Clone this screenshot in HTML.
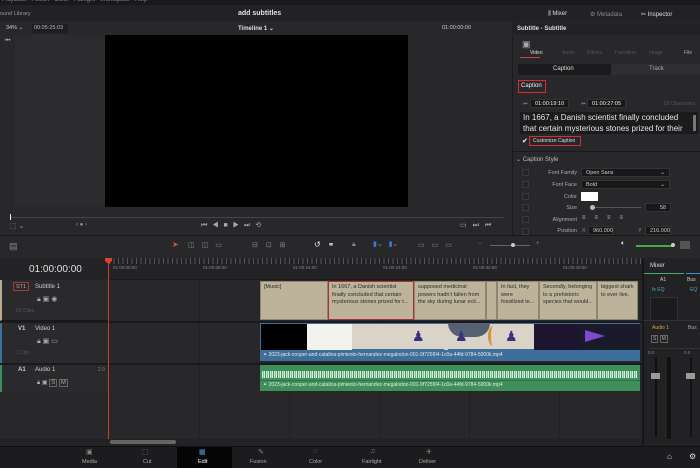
<!DOCTYPE html>
<html><head><meta charset="utf-8"><style>
*{margin:0;padding:0;box-sizing:border-box}
body{width:700px;height:468px;overflow:hidden;background:#1f1f22;font-family:"Liberation Sans",sans-serif;color:#c8c8c8;position:relative;font-size:6px}
.a{position:absolute}
.t{position:absolute;white-space:nowrap}
.clip{position:absolute;top:281px;height:39px;background:#bdb39b;border:1px solid #8e866f;color:#2a2a2a;font-size:5.5px;line-height:7.5px;padding:2px 3px;overflow:hidden}
.cb{width:7px;height:7px;border:1px solid #3a3a3d;background:#262629;position:absolute;left:522px}
.lab{position:absolute;right:123px;font-size:5.5px;color:#aaa;text-align:right}
.fld{position:absolute;background:#18181a;border:1px solid #333;height:9px;font-size:5.5px;color:#ccc;padding:1px 4px}
</style></head><body>
<div class="a" style="left:0;top:0;width:700px;height:5px;background:#19191b"></div>
<div class="t" style="left:2px;top:-3px;font-size:6px;color:#888">Playback &nbsp; Fusion &nbsp; Color &nbsp; Fairlight &nbsp; Workspace &nbsp; Help</div>
<div class="a" style="left:0;top:5px;width:512px;height:17px;background:#222225"></div>
<div class="t" style="left:0;top:11px;font-size:5.5px;color:#999">ound Library</div>
<div class="t" style="left:238px;top:10px;font-size:7px;color:#e0e0e0;font-weight:bold">add subtitles</div>
<div class="a" style="left:512px;top:5px;width:188px;height:17px;background:#222225"></div>
<div class="t" style="left:548px;top:11px;font-size:6px;color:#ddd">⫼ Mixer</div>
<div class="t" style="left:590px;top:11px;font-size:6px;color:#888">⚙ Metadata</div>
<div class="t" style="left:641px;top:11px;font-size:6px;color:#ddd">✂ Inspector</div>
<div class="a" style="left:0;top:22px;width:512px;height:13px;background:#28282b"></div>
<div class="t" style="left:6px;top:25px;font-size:5.5px;color:#ccc">34% ⌄</div>
<div class="a" style="left:32px;top:24px;width:36px;height:9px;background:#1e1e20"></div>
<div class="t" style="left:34px;top:25px;font-size:5.5px;color:#bbb">00:05:25:03</div>
<div class="t" style="left:238px;top:25px;font-size:6px;color:#ddd;font-weight:bold">Timeline 1 ⌄</div>
<div class="t" style="left:442px;top:25px;font-size:5.5px;color:#ccc">01:00:00:00</div>
<div class="a" style="left:0;top:35px;width:512px;height:200px;background:#28282b"></div>
<div class="a" style="left:15px;top:35px;width:90px;height:172px;background:#2c2c2f"></div>
<div class="a" style="left:105px;top:35px;width:303px;height:172px;background:#000"></div>
<div class="t" style="left:5px;top:38px;font-size:6px;color:#aaa">⏮</div>
<div class="a" style="left:10px;top:217px;width:494px;height:1px;background:#444"></div>
<div class="a" style="left:10px;top:214px;width:1px;height:6px;background:#eee"></div>
<div class="t" style="left:10px;top:222px;font-size:7px;color:#999">⬚ ⌄</div>
<div class="t" style="left:76px;top:222px;font-size:6px;color:#999">‹ ● ›</div>
<div class="t" style="left:201px;top:221px;font-size:7px;color:#aaa;letter-spacing:5px">⏮◀■▶⏭⟲</div>
<div class="t" style="left:460px;top:221px;font-size:7px;color:#aaa;letter-spacing:6px">▭⏭⏮</div>
<div class="a" style="left:512px;top:22px;width:188px;height:213px;background:#28282b;border-left:1px solid #1a1a1c"></div>
<div class="a" style="left:512px;top:23px;width:188px;height:12px;background:#222225"></div>
<div class="t" style="left:517px;top:26px;font-size:6px;color:#ddd;font-weight:bold">Subtitle - Subtitle</div>
<div class="t" style="left:522px;top:39px;font-size:9px;color:#aaa">▣</div>
<div class="t" style="left:530px;top:50px;font-size:5px;color:#ddd">Video</div>
<div class="a" style="left:520px;top:57px;width:20px;height:1px;background:#d04040"></div>
<div class="t" style="left:562px;top:50px;font-size:5px;color:#555">Audio</div>
<div class="t" style="left:587px;top:50px;font-size:5px;color:#555">Effects</div>
<div class="t" style="left:614px;top:50px;font-size:5px;color:#555">Transition</div>
<div class="t" style="left:649px;top:50px;font-size:5px;color:#555">Image</div>
<div class="t" style="left:684px;top:50px;font-size:5px;color:#aaa">File</div>
<div class="a" style="left:518px;top:64px;width:93px;height:11px;background:#1b1b1d"></div>
<div class="a" style="left:611px;top:64px;width:89px;height:11px;background:#2e2e31"></div>
<div class="t" style="left:553px;top:66px;font-size:6px;color:#ddd">Caption</div>
<div class="t" style="left:649px;top:66px;font-size:6px;color:#aaa">Track</div>
<div class="a" style="left:518px;top:80px;width:28px;height:13px;border:1px solid #d03030"></div>
<div class="t" style="left:521px;top:83px;font-size:6px;color:#eee">Caption</div>
<div class="t" style="left:523px;top:101px;font-size:5px;color:#888">⏮</div>
<div class="fld" style="left:530px;top:99px;width:39px;color:#eee">01:00:19:10</div>
<div class="t" style="left:581px;top:101px;font-size:5px;color:#888">⏮</div>
<div class="fld" style="left:587px;top:99px;width:39px;color:#eee">01:00:27:05</div>
<div class="t" style="left:664px;top:101px;font-size:5px;color:#555">93 Characters</div>
<div class="a" style="left:520px;top:112px;width:178px;height:22px;background:#1b1b1d"></div>
<div class="t" style="left:523px;top:113px;font-size:8px;line-height:10.5px;color:#e6e6e6">In 1667, a Danish scientist finally concluded<br>that certain mysterious stones prized for their</div>
<div class="a" style="left:693px;top:115px;width:3px;height:16px;background:#777"></div>
<div class="t" style="left:522px;top:137px;font-size:7px;color:#fff">✔</div>
<div class="a" style="left:529px;top:136px;width:52px;height:10px;border:1px solid #d03030"></div>
<div class="t" style="left:533px;top:138px;font-size:5px;color:#ddd">Customize Caption</div>
<div class="a" style="left:512px;top:151px;width:188px;height:1px;background:#1a1a1c"></div>
<div class="t" style="left:516px;top:156px;font-size:6px;color:#bbb">⌄ Caption Style</div>
<div class="cb" style="top:169px"></div><div class="lab" style="top:170px">Font Family</div><div class="fld" style="left:581px;top:168px;width:89px">Open Sans<span style="float:right">⌄</span></div>
<div class="cb" style="top:181px"></div><div class="lab" style="top:182px">Font Face</div><div class="fld" style="left:581px;top:180px;width:89px">Bold<span style="float:right">⌄</span></div>
<div class="cb" style="top:193px"></div><div class="lab" style="top:194px">Color</div><div class="a" style="left:581px;top:192px;width:17px;height:9px;background:#fff"></div>
<div class="cb" style="top:204px"></div><div class="lab" style="top:205px">Size</div><div class="a" style="left:591px;top:207px;width:50px;height:1px;background:#555"></div><div class="a" style="left:590px;top:205px;width:5px;height:5px;border-radius:50%;background:#bbb"></div><div class="fld" style="left:645px;top:203px;width:26px;text-align:right">58</div>
<div class="cb" style="top:216px"></div><div class="lab" style="top:217px">Alignment</div><div class="t" style="left:582px;top:215px;font-size:6px;color:#bbb;letter-spacing:9px">≡≡≡≡</div>
<div class="cb" style="top:228px"></div><div class="lab" style="top:228px">Position</div><div class="t" style="left:582px;top:228px;font-size:5.5px;color:#888">X</div><div class="fld" style="left:588px;top:226px;width:25px">960.000</div><div class="t" style="left:638px;top:228px;font-size:5.5px;color:#888">Y</div><div class="fld" style="left:645px;top:226px;width:26px">216.000</div>
<div class="a" style="left:0;top:235px;width:700px;height:23px;background:#28282b;border-top:1px solid #19191b"></div>
<div class="t" style="left:9px;top:241px;font-size:9px;color:#888">▤</div>
<div class="t" style="left:172px;top:240px;font-size:8px;color:#e04a3a">➤</div>
<div class="t" style="left:188px;top:241px;font-size:7px;color:#888;letter-spacing:7px">◫◫▭</div>
<div class="t" style="left:252px;top:241px;font-size:7px;color:#888;letter-spacing:8px">⊟⊡⊞</div>
<div class="t" style="left:314px;top:240px;font-size:8px;color:#eee;letter-spacing:7px">↺⚭</div>
<div class="t" style="left:352px;top:241px;font-size:7px;color:#888">🔒︎</div>
<div class="t" style="left:373px;top:240px;font-size:7px;color:#2f7fe0">▮<span style="color:#888">⌄</span> &nbsp; ▮<span style="color:#888">⌄</span></div>
<div class="t" style="left:418px;top:241px;font-size:7px;color:#888;letter-spacing:7px">▭▭▭</div>
<div class="t" style="left:478px;top:241px;font-size:6px;color:#888">−</div>
<div class="a" style="left:490px;top:245px;width:40px;height:1px;background:#666"></div>
<div class="a" style="left:511px;top:243px;width:4px;height:4px;border-radius:50%;background:#ccc"></div>
<div class="t" style="left:536px;top:241px;font-size:6px;color:#888">+</div>
<div class="t" style="left:621px;top:240px;font-size:7px;color:#ccc">🔈︎</div>
<div class="a" style="left:636px;top:245px;width:37px;height:2px;background:#3fae3f"></div>
<div class="a" style="left:671px;top:243px;width:4px;height:4px;border-radius:50%;background:#ccc"></div>
<div class="a" style="left:680px;top:241px;width:10px;height:8px;background:#555"></div>
<div class="a" style="left:0;top:258px;width:642px;height:188px;background:#28282b"></div>
<div class="a" style="left:0;top:258px;width:109px;height:22px;background:#232326"></div>
<div class="t" style="left:29px;top:264px;font-size:10px;color:#e0e0e0">01:00:00:00</div>
<div class="a" style="left:109px;top:258px;width:533px;height:22px;background:#232326;border-bottom:1px solid #1a1a1c"></div>
<div class="a" style="left:109px;top:258px;width:533px;height:6px;background:repeating-linear-gradient(90deg,#555 0 1px,transparent 1px 4.5px)"></div>
<div class="t" style="left:113px;top:265px;font-size:4.5px;color:#888">01:00:00:00</div>
<div class="t" style="left:203px;top:265px;font-size:4.5px;color:#888">01:00:08:00</div>
<div class="t" style="left:293px;top:265px;font-size:4.5px;color:#888">01:00:16:00</div>
<div class="t" style="left:383px;top:265px;font-size:4.5px;color:#888">01:00:24:00</div>
<div class="t" style="left:473px;top:265px;font-size:4.5px;color:#888">01:00:32:00</div>
<div class="t" style="left:563px;top:265px;font-size:4.5px;color:#888">01:00:40:00</div>
<div class="a" style="left:199px;top:280px;width:1px;height:166px;background:#222"></div>
<div class="a" style="left:289px;top:280px;width:1px;height:166px;background:#222"></div>
<div class="a" style="left:379px;top:280px;width:1px;height:166px;background:#222"></div>
<div class="a" style="left:469px;top:280px;width:1px;height:166px;background:#222"></div>
<div class="a" style="left:559px;top:280px;width:1px;height:166px;background:#222"></div>
<div class="a" style="left:0;top:280px;width:109px;height:41px;background:#2a2a2d;border-left:2px solid #b8ad90;border-bottom:1px solid #18181a"></div>
<div class="a" style="left:13px;top:282px;width:16px;height:9px;border:1px solid #9c3a3a"></div>
<div class="t" style="left:16px;top:284px;font-size:5.5px;color:#aaa">ST1</div>
<div class="t" style="left:35px;top:284px;font-size:6px;color:#ccc">Subtitle 1</div>
<div class="t" style="left:37px;top:295px;font-size:7px;color:#aaa">🔒︎ ▣ ◉</div>
<div class="t" style="left:16px;top:308px;font-size:5px;color:#555">62 Clips</div>
<div class="a" style="left:0;top:321px;width:642px;height:2px;background:#1a1a1c"></div>
<div class="a" style="left:0;top:323px;width:109px;height:40px;background:#2a2a2d;border-left:2px solid #3d6e9c"></div>
<div class="t" style="left:18px;top:326px;font-size:6px;color:#ccc;font-weight:bold">V1</div>
<div class="t" style="left:35px;top:326px;font-size:6px;color:#ccc">Video 1</div>
<div class="t" style="left:37px;top:337px;font-size:7px;color:#aaa">🔒︎ ▣ ▭</div>
<div class="t" style="left:16px;top:350px;font-size:5px;color:#555">1 Clip</div>
<div class="a" style="left:0;top:363px;width:642px;height:2px;background:#1a1a1c"></div>
<div class="a" style="left:0;top:365px;width:109px;height:27px;background:#2a2a2d;border-left:2px solid #3f8f5a"></div>
<div class="t" style="left:18px;top:367px;font-size:6px;color:#ccc;font-weight:bold">A1</div>
<div class="t" style="left:35px;top:367px;font-size:6px;color:#ccc">Audio 1</div>
<div class="t" style="left:98px;top:367px;font-size:5px;color:#777">2.0</div>
<div class="t" style="left:37px;top:379px;font-size:6px;color:#aaa">🔒︎ ▣ <span style="border:1px solid #666;padding:0 1px">S</span> <span style="border:1px solid #666;padding:0 1px">M</span></div>
<div class="clip" style="left:260px;width:68px">[Music]</div>
<div class="clip" style="left:328px;width:86px;border:1.5px solid #b03030">In 1667, a Danish scientist finally concluded that certain mysterious stones prized for t...</div>
<div class="clip" style="left:414px;width:72px">supposed medicinal powers hadn't fallen from the sky during lunar ecli...</div>
<div class="clip" style="left:486px;width:11px"></div>
<div class="clip" style="left:497px;width:42px">In fact, they were fossilized te...</div>
<div class="clip" style="left:539px;width:58px">Secondly, belonging to a prehistoric species that would...</div>
<div class="clip" style="left:597px;width:41px">biggest shark to ever live.</div>
<div class="a" style="left:260px;top:323px;width:380px;height:27px;background:#d9d3c8;border:1px solid #3d6e9c"></div>
<div class="a" style="left:261px;top:324px;width:46px;height:26px;background:#000"></div>
<div class="a" style="left:307px;top:324px;width:45px;height:26px;background:#f4f2ee"></div>
<div class="a" style="left:444px;top:324px;width:4px;height:26px;background:#d9d3c8"></div>
<div class="a" style="left:448px;top:323px;width:42px;height:14px;border-radius:0 0 21px 21px;background:#556070"></div>
<div class="t" style="left:412px;top:328px;font-size:14px;color:#3a3080">♟</div>
<div class="t" style="left:455px;top:328px;font-size:14px;color:#3a3080">♟</div>
<div class="t" style="left:505px;top:328px;font-size:14px;color:#3a3080">♟</div>
<div class="a" style="left:488px;top:326px;width:10px;height:20px;border-left:3px solid #d8903a;border-radius:50%"></div>
<div class="a" style="left:534px;top:324px;width:44px;height:26px;background:#1d1430"></div>
<div class="a" style="left:578px;top:324px;width:62px;height:26px;background:#1a1a2a"></div>
<div class="a" style="left:585px;top:330px;width:20px;height:12px;background:#7a4ad0;clip-path:polygon(0 0,100% 50%,0 100%)"></div>
<div class="a" style="left:260px;top:350px;width:380px;height:11px;background:#3d6e9c"></div>
<div class="t" style="left:263px;top:352px;font-size:5px;color:#e8e8e8">⚭ 2023-jack-cooper-and-catalina-pimiento-hernandez-megalodon-001-9f725f04-1c0a-44fd-9784-5000k.mp4</div>
<div class="a" style="left:260px;top:365px;width:380px;height:26px;background:#3f8f5a"></div>
<div class="a" style="left:262px;top:371px;width:376px;height:7px;background:repeating-linear-gradient(90deg,#cfe8d6 0 1px,#7fbf94 1px 2px,#e0f0e4 2px 3px,#3f8f5a 3px 4px)"></div>
<div class="a" style="left:260px;top:380px;width:380px;height:1px;background:#2f6f45"></div>
<div class="t" style="left:263px;top:382px;font-size:5px;color:#e8e8e8">⚭ 2023-jack-cooper-and-catalina-pimiento-hernandez-megalodon-001-9f725f04-1c0a-44fd-9784-5000k.mp4</div>
<div class="a" style="left:108px;top:258px;width:1px;height:188px;background:#d0382c"></div>
<div class="a" style="left:105px;top:258px;width:7px;height:6px;background:#e0402e;clip-path:polygon(0 0,100% 0,100% 50%,50% 100%,0 50%)"></div>
<div class="a" style="left:0;top:439px;width:642px;height:7px;background:#232326"></div>
<div class="a" style="left:110px;top:440px;width:66px;height:4px;background:#666;border-radius:2px"></div>
<div class="a" style="left:642px;top:258px;width:58px;height:188px;background:#222225;border-left:2px solid #161618"></div>
<div class="t" style="left:650px;top:263px;font-size:6px;color:#ddd">Mixer</div>
<div class="a" style="left:644px;top:273px;width:40px;height:1px;background:#3fae6f"></div>
<div class="a" style="left:686px;top:273px;width:14px;height:1px;background:#3f8fd0"></div>
<div class="t" style="left:660px;top:277px;font-size:5px;color:#ccc">A1</div>
<div class="t" style="left:687px;top:277px;font-size:5px;color:#ccc">Bus</div>
<div class="t" style="left:652px;top:287px;font-size:5px;color:#4ac;">fx EQ</div>
<div class="t" style="left:690px;top:287px;font-size:5px;color:#4ac">EQ</div>
<div class="a" style="left:650px;top:297px;width:28px;height:24px;border:1px solid #333;background:#1c1c1e"></div>
<div class="a" style="left:643px;top:320px;width:57px;height:1px;background:#333"></div>
<div class="t" style="left:652px;top:325px;font-size:5px;color:#d8a040">Audio 1</div>
<div class="t" style="left:688px;top:325px;font-size:5px;color:#aaa">Bus</div>
<div class="t" style="left:651px;top:336px;font-size:5px;color:#aaa"><span style="border:1px solid #666;padding:0 1px">S</span> <span style="border:1px solid #666;padding:0 1px">M</span></div>
<div class="a" style="left:649px;top:348px;width:51px;height:1px;background:#333"></div>
<div class="t" style="left:648px;top:350px;font-size:4.5px;color:#888">0.0</div>
<div class="t" style="left:684px;top:350px;font-size:4.5px;color:#888">0.0</div>
<div class="a" style="left:655px;top:357px;width:2px;height:80px;background:#111"></div>
<div class="a" style="left:651px;top:373px;width:9px;height:6px;background:#999"></div>
<div class="a" style="left:667px;top:357px;width:4px;height:82px;background:#111"></div>
<div class="a" style="left:690px;top:357px;width:2px;height:80px;background:#111"></div>
<div class="a" style="left:686px;top:373px;width:9px;height:6px;background:#999"></div>
<div class="a" style="left:0;top:446px;width:700px;height:22px;background:#1c1c1e;border-top:1px solid #111"></div>
<div class="a" style="left:177px;top:447px;width:55px;height:21px;background:#050505"></div>
<div class="t" style="left:86px;top:448px;font-size:7px;color:#888">▣</div><div class="t" style="left:82px;top:459px;font-size:5.5px;color:#aaa">Media</div>
<div class="t" style="left:142px;top:448px;font-size:7px;color:#888">⬚</div><div class="t" style="left:143px;top:459px;font-size:5.5px;color:#aaa">Cut</div>
<div class="t" style="left:199px;top:448px;font-size:7px;color:#4a9fe0">▦</div><div class="t" style="left:198px;top:459px;font-size:5.5px;color:#fff">Edit</div>
<div class="t" style="left:258px;top:448px;font-size:7px;color:#888">✎</div><div class="t" style="left:250px;top:459px;font-size:5.5px;color:#aaa">Fusion</div>
<div class="t" style="left:313px;top:448px;font-size:7px;color:#888">◌</div><div class="t" style="left:309px;top:459px;font-size:5.5px;color:#aaa">Color</div>
<div class="t" style="left:370px;top:448px;font-size:7px;color:#888">♫</div><div class="t" style="left:362px;top:459px;font-size:5.5px;color:#aaa">Fairlight</div>
<div class="t" style="left:426px;top:448px;font-size:7px;color:#888">✈</div><div class="t" style="left:419px;top:459px;font-size:5.5px;color:#aaa">Deliver</div>
<div class="t" style="left:667px;top:452px;font-size:8px;color:#ddd">⌂</div>
<div class="t" style="left:689px;top:452px;font-size:8px;color:#ddd">⚙</div>
</body></html>
